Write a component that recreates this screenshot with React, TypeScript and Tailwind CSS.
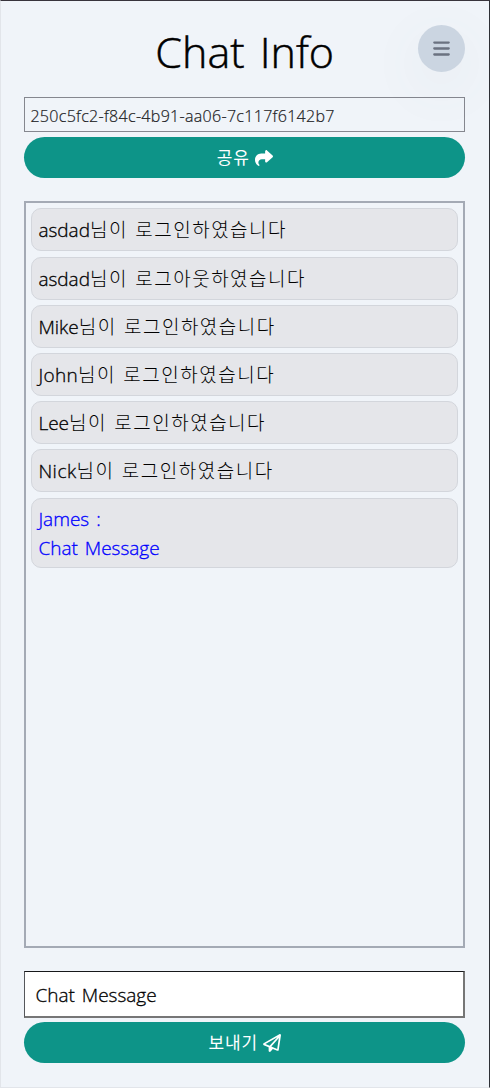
import { FaBars, FaShare, FaRegPaperPlane } from "react-icons/fa6";

const notices = [
  { name: "asdad", action: "로그인", spacing: "" },
  { name: "asdad", action: "로그아웃", spacing: "" },
  { name: "Mike", action: "로그인", spacing: "" },
  { name: "John", action: "로그인", spacing: "tracking-[0.35px]" },
  { name: "Lee", action: "로그인", spacing: "" },
  { name: "Nick", action: "로그인", spacing: "tracking-[0.5px]" },
];

export default function App() {
  return (
    <div className="flex h-[1088px] w-[490px] flex-col border-t border-r border-b border-l border-t-[#38343c] border-r-[#2e3036] border-b-[#e2e5ea] border-l-[#e2e5ea] bg-[#f0f4f9] pt-[23px] pr-[24px] pl-[23.4px] font-['Open_Sans','Noto_Sans_CJK_KR',sans-serif] text-black">
      <header className="relative flex h-[73px] shrink-0 items-start justify-center">
        <h1 className="mt-[-1px] text-[43px] leading-[58px] font-light [word-spacing:4px] whitespace-nowrap [-webkit-text-stroke:0.5px]">Chat Info</h1>
        <button className="absolute top-[0.7px] right-0 flex size-[47.5px] items-center justify-center rounded-full bg-[#cbd5e1] text-[#6b7280] shadow-[0_15px_50px_10px_rgba(100,116,139,0.04)]">
          <FaBars className="size-[19px]" />
        </button>
      </header>
      <div className="flex h-[35px] shrink-0 items-center border border-[#85878f] pt-[2px] pl-[5px] text-[16px] font-light tracking-[0.31px] text-[#202124] [-webkit-text-stroke:0.2px]">
        250c5fc2-f84c-4b91-aa06-7c117f6142b7
      </div>
      <button className="mt-[5px] flex h-[41px] shrink-0 items-center justify-center gap-[5px] rounded-full bg-[#0d9488] text-[17px] text-white">
        <span className="tracking-[0.8px]">공유</span>
        <FaShare className="size-[18px]" />
      </button>
      <main className="mt-[23px] flex h-[746.5px] shrink-0 flex-col gap-[5.2px] border-2 border-[#a4aab5] px-[5px] pt-[5.4px] text-[19px] leading-[29px] font-light">
        {notices.map((n, i) => (
          <div key={i} className="flex h-[43px] shrink-0 items-center rounded-[10px] border border-[#d3d6dc] bg-[#e5e6ea] pt-[2px] pl-[6px] whitespace-nowrap">
            <span className={`${n.spacing} [-webkit-text-stroke:0.3px]`}>{n.name}</span>
            <span className="tracking-[1.5px] [word-spacing:0.8px]">님이 {n.action}하였습니다</span>
          </div>
        ))}
        <div className="h-[70px] shrink-0 rounded-[10px] border border-[#d3d6dc] bg-[#e5e6ea] pt-[6.5px] pl-[6px] [word-spacing:2px] text-[#0000ff] [-webkit-text-stroke:0.3px]">
          <p>James :</p>
          <p>Chat Message</p>
        </div>
      </main>
      <div className="mt-[23px] flex h-[47px] shrink-0 items-center border border-r-2 border-b-2 border-t-[#17181a] border-r-[#767676] border-b-[#767676] border-l-[#55575b] bg-white pt-[4px] pl-[10px] text-[19px] font-light [word-spacing:2px] [-webkit-text-stroke:0.3px]">
        Chat Message
      </div>
      <button className="mt-[4px] flex h-[41px] shrink-0 items-center justify-center gap-[5px] rounded-full bg-[#0d9488] pt-[2px] text-[17px] text-white">
        <span className="tracking-[0.8px]">보내기</span>
        <FaRegPaperPlane className="size-[18px]" />
      </button>
    </div>
  );
}
